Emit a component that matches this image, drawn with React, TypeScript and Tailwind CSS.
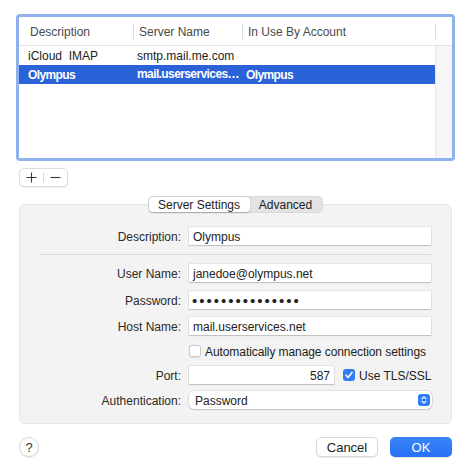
import React from "react";

const field =
  "h-[18px] bg-white flex items-center pt-[2px] shadow-[0_0_0_0.5px_rgba(0,0,0,0.12),0_1px_1px_rgba(0,0,0,0.14)]";

function Row({ label, children, className = "" }: { label: string; children: React.ReactNode; className?: string }) {
  return (
    <div className={"flex items-center h-[18px] " + className}>
      <div className="w-[161px] text-right text-[#2a2a2a] pt-[2px]">{label}</div>
      <div className="ml-[8px] flex items-center">{children}</div>
    </div>
  );
}

export default function App() {
  return (
    <div className="w-[470px] h-[473px] bg-white overflow-hidden text-[12px] leading-none text-[#222] font-['Liberation_Sans',Arial,sans-serif]">
      <div className="pt-[14px] pl-[16px]">
        {/* Table */}
        <div className="w-[439px] h-[147px] border-[3px] border-[#8fb1ee] rounded-[4px] bg-white flex flex-col overflow-hidden">
          <div className="h-[29px] flex items-center border-b border-[#e3e3e3] text-[#4a4a4a] pt-[1px]">
            <div className="w-[114px] pl-[11px]">Description</div>
            <div className="w-px h-[15px] bg-[#dcdcdc]" />
            <div className="w-[108px] pl-[5px]">Server Name</div>
            <div className="w-px h-[15px] bg-[#dcdcdc]" />
            <div className="w-[192px] pl-[5px]">In Use By Account</div>
            <div className="w-px h-[15px] bg-[#dcdcdc]" />
            <div className="flex-1" />
          </div>
          <div className="flex flex-1">
            <div className="w-[416px] flex flex-col">
              <div className="h-[19px] flex items-center">
                <div className="w-[114px] pl-[9px] whitespace-pre">iCloud  IMAP</div>
                <div className="w-[109px] pl-[4px]">smtp.mail.me.com</div>
                <div className="flex-1 pl-[4px]"></div>
              </div>
              <div className="h-[19px] flex items-center bg-[#2b62d8] text-white font-bold tracking-[-0.6px]">
                <div className="w-[114px] pl-[9px]">Olympus</div>
                <div className="w-[109px] pl-[4px] pr-[1px] truncate leading-[19px]">mail.userservices.net</div>
                <div className="flex-1 pl-[4px]">Olympus</div>
              </div>
            </div>
            <div className="flex-1 bg-[#f6f6f6] border-l border-[#e6e6e6]" />
          </div>
        </div>

        {/* + - */}
        <div className="mt-[7px] ml-[3px] w-[49px] h-[19px] rounded-[5px] bg-white border border-[#dcdcdc] shadow-[0_1px_1px_rgba(0,0,0,0.06)] flex items-center">
          <div className="w-[24px] flex justify-center">
            <svg width="11" height="11" viewBox="0 0 11 11">
              <path d="M5.5 0.5v10M0.5 5.5h10" stroke="#3a3a3a" strokeWidth="1.1" />
            </svg>
          </div>
          <div className="w-px h-[9px] bg-[#d6d6d6]" />
          <div className="w-[24px] flex justify-center">
            <svg width="11" height="11" viewBox="0 0 11 11">
              <path d="M0.5 5.5h10" stroke="#3a3a3a" strokeWidth="1.1" />
            </svg>
          </div>
        </div>
      </div>

      {/* Segmented control */}
      <div className="mt-[9px] flex justify-center relative z-10">
        <div className="flex h-[17px] rounded-[5px] bg-[#e3e3e3] border border-[#d9d9d9] items-center">
          <div className="w-[101px] h-[15px] bg-white rounded-[4px] shadow-[0_0.5px_1.5px_rgba(0,0,0,0.25)] flex items-center justify-center text-[#222] pt-[1px]">
            Server Settings
          </div>
          <div className="w-[72px] h-[15px] flex items-center justify-center text-[#222] pt-[1px]">Advanced</div>
        </div>
      </div>

      {/* Group box */}
      <div className="-mt-[9px] ml-[19px] w-[433px] h-[220px] rounded-[6px] bg-[#f3f3f3] border border-[#e6e6e6] pt-[22px]">
        <Row label="Description:">
          <div className={field + " w-[242px] pl-[4px]"}>Olympus</div>
        </Row>
        <div className="mt-[9px] ml-[19px] w-[392px] h-px bg-[#d6d6d6]" />
        <Row label="User Name:" className="mt-[9px]">
          <div className={field + " w-[242px] pl-[4px]"}>janedoe@olympus.net</div>
        </Row>
        <Row label="Password:" className="mt-[9px]">
          <div className="h-[18px] bg-white flex items-center shadow-[0_0_0_0.5px_rgba(0,0,0,0.12),0_1px_1px_rgba(0,0,0,0.14)] w-[242px] pl-[3px]">
            <span className="text-[15px] tracking-[2px] text-[#222] leading-none">•••••••••••••••</span>
          </div>
        </Row>
        <Row label="Host Name:" className="mt-[8px]">
          <div className={field + " w-[242px] pl-[4px]"}>mail.userservices.net</div>
        </Row>
        <Row label="" className="mt-[7px]">
          <div className="w-[12px] h-[12px] rounded-[3px] bg-white border border-[#c9c9c9] shadow-[0_0.5px_1px_rgba(0,0,0,0.1)]" />
          <div className="ml-[4px] text-[#222] pt-[2px] tracking-[-0.08px]">Automatically manage connection settings</div>
        </Row>
        <Row label="Port:" className="mt-[6px]">
          <div className={field + " w-[145px] justify-end pr-[4px]"}>587</div>
          <div className="ml-[9px] w-[12px] h-[12px] rounded-[3px] bg-[#2f7cf6] flex items-center justify-center">
            <svg width="10" height="10" viewBox="0 0 10 10">
              <path d="M2 5.2l2 2.2 4-5" fill="none" stroke="white" strokeWidth="1.6" strokeLinecap="round" strokeLinejoin="round" />
            </svg>
          </div>
          <div className="ml-[4px] text-[#222] pt-[2px]">Use TLS/SSL</div>
        </Row>
        <Row label="Authentication:" className="mt-[7px]">
          <div className="w-[243px] h-[18px] rounded-[5px] bg-white flex items-center justify-between pl-[6px] pr-[2px] shadow-[0_0_0_0.5px_rgba(0,0,0,0.15),0_1px_1.5px_rgba(0,0,0,0.15)]">
            <span className="pt-[2px]">Password</span>
            <div className="w-[12px] h-[12px] rounded-[3px] bg-[#2f7cf6] flex items-center justify-center">
              <svg width="8" height="10" viewBox="0 0 8 10">
                <path d="M2 3.8L4 1.8l2 2M2 6.2l2 2 2-2" fill="none" stroke="white" strokeWidth="1.2" strokeLinecap="round" strokeLinejoin="round" />
              </svg>
            </div>
          </div>
        </Row>
      </div>

      {/* Bottom buttons */}
      <div className="mt-[13px] pl-[19px] pr-[18px] flex items-center">
        <div className="w-[20px] h-[20px] rounded-full bg-white border border-[#d9d9d9] shadow-[0_1px_1px_rgba(0,0,0,0.08)] flex items-center justify-center text-[13px] text-[#333]">
          ?
        </div>
        <div className="flex-1" />
        <div className="w-[62px] h-[20px] rounded-[5px] bg-white border border-[#dadada] shadow-[0_1px_1px_rgba(0,0,0,0.08)] flex items-center justify-center text-[13px] text-[#222]">
          Cancel
        </div>
        <div className="ml-[12px] w-[62px] h-[20px] rounded-[5px] bg-gradient-to-b from-[#3a86f7] to-[#2670f5] shadow-[0_1px_1px_rgba(0,0,0,0.12)] flex items-center justify-center text-[13px] text-white font-medium">
          OK
        </div>
      </div>
    </div>
  );
}
